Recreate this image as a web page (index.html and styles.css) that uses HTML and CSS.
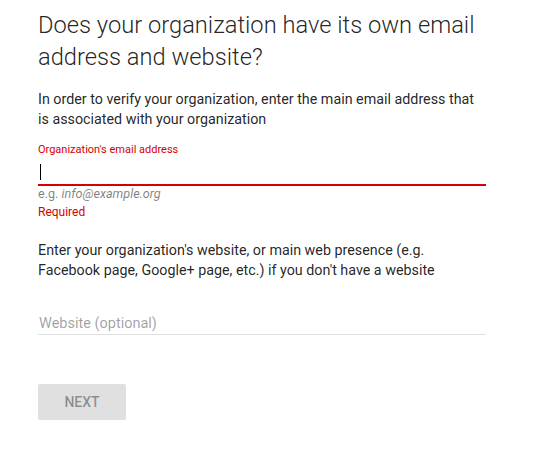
FILE: index.html
```html
<!DOCTYPE html>
<html lang="en">
<head>
<meta charset="utf-8">
<title>Organization details</title>
<link rel="stylesheet" href="styles.css">
</head>
<body>
<main class="page">
  <h1 class="title">Does your organization have its own email address and website?</h1>
  <p class="lead">In order to verify your organization, enter the main email address that is associated with your organization</p>
  <div class="field field--invalid">
    <label class="field-label">Organization's email address</label>
    <div class="field-input"><span class="caret"></span></div>
    <div class="field-hint">e.g. <em>info@example.org</em></div>
    <div class="field-error">Required</div>
  </div>
  <p class="lead lead--second">Enter your organization's website, or main web presence (e.g. Facebook page, Google+ page, etc.) if you don't have a website</p>
  <div class="field field--plain">
    <input class="text-input" type="text" placeholder="Website (optional)">
  </div>
  <button class="btn" type="button">Next</button>
</main>
</body>
</html>
```

FILE: styles.css
```css
html, body {
  margin: 0;
  padding: 0;
  background: #ffffff;
}

body {
  font-family: Roboto, "Noto Sans", "Liberation Sans", sans-serif;
  color: rgba(0, 0, 0, 0.87);
}

.page {
  width: 448px;
  padding: 9px 0 0 38px;
}

.title {
  margin: 0;
  font-size: 23.7px;
  font-weight: 300;
  line-height: 32px;
  color: rgba(0, 0, 0, 0.87);
}

.lead {
  margin: 16px 0 0;
  font-size: 14.3px;
  line-height: 20px;
}

.lead--second {
  margin-top: 21px;
}

.field {
  display: flex;
  flex-direction: column;
  margin-top: 14px;
}

.field-label {
  font-size: 11px;
  line-height: 14px;
  color: #d50000;
}

.field-input {
  height: 27px;
  border-bottom: 2px solid #d50000;
  display: flex;
  align-items: flex-start;
}

.caret {
  display: block;
  width: 1px;
  height: 16px;
  margin: 7px 0 0 2px;
  background: #000;
}

.field-hint {
  padding-top: 1px;
  font-size: 12.6px;
  line-height: 14px;
  color: rgba(0, 0, 0, 0.5);
}

.field-hint em {
  font-style: italic;
}

.field-error {
  margin-top: 4px;
  font-size: 12px;
  line-height: 14px;
  color: #d50000;
}

.field--plain {
  margin-top: 29px;
}

.text-input {
  box-sizing: border-box;
  width: 100%;
  height: 26px;
  margin: 0;
  padding: 3px 0 0 1px;
  border: 0;
  border-bottom: 1px solid #e0e0e0;
  outline: none;
  background: transparent;
  font-family: inherit;
  font-size: 14.5px;
  color: rgba(0, 0, 0, 0.87);
}

.text-input::placeholder {
  color: rgba(0, 0, 0, 0.38);
}

.btn {
  display: block;
  min-width: 88px;
  height: 36px;
  margin: 49px 0 0;
  padding: 0 16px;
  border: 0;
  border-radius: 2px;
  background: #e0e0e0;
  font-family: inherit;
  font-size: 14px;
  font-weight: 500;
  text-transform: uppercase;
  color: rgba(0, 0, 0, 0.38);
  cursor: default;
}
```
